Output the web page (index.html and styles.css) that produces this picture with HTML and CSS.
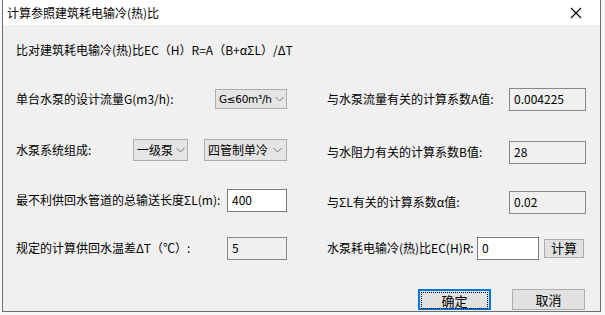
FILE: index.html
```html
<!DOCTYPE html>
<html lang="zh-CN">
<head>
    <meta charset="UTF-8">
    <title>计算参照建筑耗电输冷(热)比</title>
    <link rel="stylesheet" href="styles.css">
</head>
<body>
    <div class="dialog">
        <div class="titlebar">
            <span class="title">计算参照建筑耗电输冷(热)比</span>
            <svg class="close" width="12" height="12" viewBox="0 0 12 12">
                <path d="M1 1 L11 11 M11 1 L1 11" stroke="#000" stroke-width="1.1" fill="none"/>
            </svg>
        </div>

        <div class="content">
            <p class="formula">比对建筑耗电输冷(热)比EC（H）R=A（B+αΣL）/ΔT</p>

            <div class="form">
                <div class="field left">
                    <span>单台水泵的设计流量G(m3/h):</span>
                    <div class="combo w72 latin">G≤60m³/h<svg class="arrow" width="9" height="6" viewBox="0 0 9 6"><path d="M0.5 1 L4.5 5 L8.5 1" stroke="#777" fill="none"/></svg></div>
                </div>
                <div class="field right">
                    <span>与水泵流量有关的计算系数A值:</span>
                    <div class="box ro">0.004225</div>
                </div>

                <div class="field left">
                    <span>水泵系统组成:</span>
                    <div class="combos">
                        <div class="combo w55 big">一级泵<svg class="arrow" width="9" height="6" viewBox="0 0 9 6"><path d="M0.5 1 L4.5 5 L8.5 1" stroke="#777" fill="none"/></svg></div>
                        <div class="combo w83 big">四管制单冷<svg class="arrow" width="9" height="6" viewBox="0 0 9 6"><path d="M0.5 1 L4.5 5 L8.5 1" stroke="#777" fill="none"/></svg></div>
                    </div>
                </div>
                <div class="field right down">
                    <span>与水阻力有关的计算系数B值:</span>
                    <div class="box ro">28</div>
                </div>

                <div class="field left">
                    <span>最不利供回水管道的总输送长度ΣL(m):</span>
                    <div class="box small edit">400</div>
                </div>
                <div class="field right down">
                    <span>与ΣL有关的计算系数α值:</span>
                    <div class="box ro">0.02</div>
                </div>

                <div class="field left">
                    <span>规定的计算供回水温差ΔT（℃）:</span>
                    <div class="box small ro">5</div>
                </div>
                <div class="field right">
                    <span>水泵耗电输冷(热)比EC(H)R:</span>
                    <div class="result">
                        <div class="box small edit">0</div>
                        <button class="btn calc">计算</button>
                    </div>
                </div>
            </div>

            <div class="footer">
                <button class="btn default"><span>确定</span></button>
                <button class="btn">取消</button>
            </div>
        </div>
    </div>
</body>
</html>
```

FILE: styles.css
```css
body {
    margin: 0;
    background: #f7f7f7;
    font-family: 'Noto Sans CJK SC', 'Noto Sans', sans-serif;
    font-size: 12px;
    color: #000;
}

.dialog {
    margin-left: 2px;
    width: 597px;
    height: 311px;
    border: 1px solid #6e6e6e;
    border-top: none;
    background: #f0f0f0;
}

.titlebar {
    height: 25px;
    background: #fff;
    display: flex;
    align-items: center;
    justify-content: space-between;
    padding: 0 18px 0 4px;
}

.title {
    font-size: 12px;
    line-height: 16px;
}

.content {
    padding: 0 0 0 13px;
}

.formula {
    margin: 0;
    padding-top: 16px;
    height: 18px;
    line-height: 18px;
}

.form {
    display: grid;
    grid-template-columns: 311px 259px;
    grid-template-rows: 50px 52px 48px 48px;
    margin-top: 15px;
}

.field {
    display: flex;
    align-items: center;
    justify-content: space-between;
    line-height: 16px;
    white-space: nowrap;
}

.field > * {
    flex-shrink: 0;
}

.field.left {
    padding-right: 40px;
}

.field.down {
    padding-top: 4px;
}

.combos {
    display: flex;
    gap: 16px;
}

.combo {
    height: 20px;
    box-sizing: border-box;
    border: 1px solid #adadad;
    background: #e5e5e5;
    display: flex;
    align-items: center;
    justify-content: space-between;
    padding: 0 4px 0 3px;
    font-size: 12px;
    white-space: nowrap;
    overflow: hidden;
}

.combo.latin {
    font-family: 'DejaVu Sans', 'Noto Sans', sans-serif;
    font-size: 10.5px;
    letter-spacing: -0.3px;
}

.combo.big {
    height: 22px;
}

.arrow {
    flex-shrink: 0;
    margin-left: 3px;
}

.w72 { width: 72px; }
.w55 { width: 55px; }
.w83 { width: 83px; }

.box {
    width: 77px;
    height: 23px;
    box-sizing: border-box;
    border: 1px solid #7a7a7a;
    padding: 2px 4px;
    line-height: 16px;
}

.box.small {
    width: 60px;
}

.box.ro {
    background: #f0f0f0;
    border-color: #888;
}

.box.edit {
    background: #fff;
}

.result {
    display: flex;
    align-items: center;
    gap: 5px;
    margin-right: 2px;
}

.result .box {
    width: 62px;
}

.btn {
    font-family: inherit;
    font-size: 13px;
    height: 21px;
    width: 73px;
    border: 1px solid #adadad;
    background: #e1e1e1;
    padding: 0;
    line-height: 16px;
    color: #000;
}

.btn.calc {
    width: 40px;
    height: 19px;
}

.footer {
    display: flex;
    justify-content: flex-end;
    gap: 21px;
    margin-top: 17px;
    margin-right: 15px;
}

.btn.default {
    border: 2px solid #0078d7;
    padding: 1px;
}

.btn.default span {
    display: block;
    height: 15px;
    border: 1px dotted #000;
    line-height: 15px;
}
```
